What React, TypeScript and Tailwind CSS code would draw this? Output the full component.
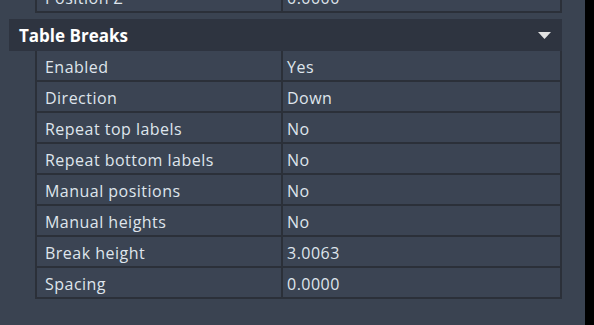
const rows = [
  { name: 'Enabled', value: 'Yes' },
  { name: 'Direction', value: 'Down' },
  { name: 'Repeat top labels', value: 'No' },
  { name: 'Repeat bottom labels', value: 'No' },
  { name: 'Manual positions', value: 'No' },
  { name: 'Manual heights', value: 'No' },
  { name: 'Break height', value: '3.0063' },
  { name: 'Spacing', value: '0.0000' },
];

function PropRow({ name, value }: { name: string; value: string }) {
  return (
    <div className="flex h-[31px] border-b-2 border-[#2b3039]">
      <div className="w-[246px] shrink-0 border-r-2 border-[#2b3039] pl-2 pt-[3px] flex items-center">
        {name}
      </div>
      <div className="flex-1 pl-1 pt-[3px] flex items-center">{value}</div>
    </div>
  );
}

export default function App() {
  return (
    <div
      className="flex h-[325px] w-[594px] overflow-hidden bg-black text-[16px] tracking-[0.03em] text-[#dfe5ec]"
      style={{ fontFamily: '"Open Sans", "Noto Sans", sans-serif' }}
    >
      <div className="w-[585px] h-full bg-[#3a4351] pl-[9px]">
        <div className="w-[553px]">
          {/* end of previous section */}
          <div className="ml-[26px] mt-[-18px] border-l-2 border-r-2 border-[#2b3039] bg-[#3b4453]">
            <PropRow name="Position Z" value="0.0000" />
          </div>

          <div className="mt-[6px] h-[32px] bg-[#2e3440] flex items-center justify-between pl-[10px] pr-[11px]">
            <span className="text-[17px] font-bold tracking-normal text-white pt-[2px]">Table Breaks</span>
            <svg width="13" height="7" viewBox="0 0 13 7">
              <polygon points="0,0 13,0 6.5,7" fill="#e2e2e2" />
            </svg>
          </div>

          <div className="ml-[26px] border-l-2 border-r-2 border-[#2b3039] bg-[#3b4453]">
            {rows.map((r) => (
              <PropRow key={r.name} name={r.name} value={r.value} />
            ))}
          </div>
        </div>
      </div>
      <div className="flex-1" />
    </div>
  );
}
